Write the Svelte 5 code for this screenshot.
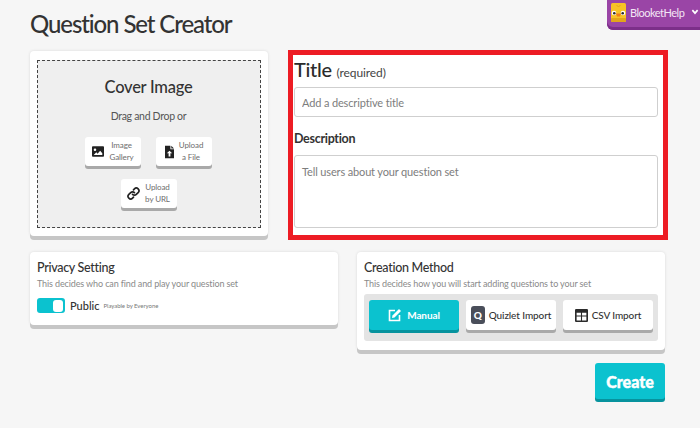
<script>
  let isPublic = $state(true);
  const methods = [
    { id: 'manual', label: 'Manual', active: true },
    { id: 'quizlet', label: 'Quizlet Import', active: false },
    { id: 'csv', label: 'CSV Import', active: false }
  ];
</script>

<main>
  <div class="account">
    <svg class="blook" viewBox="0 0 15 19" width="15" height="19">
      <rect width="15" height="19" rx="1.5" fill="#f7c326" />
      <rect y="15" width="15" height="4" rx="1" fill="#e2a51c" />
      <circle cx="3" cy="10" r="2.300" fill="#fff" />
      <circle cx="12" cy="10" r="2.300" fill="#fff" />
      <circle cx="3.300" cy="10.200" r="1.300" fill="#2a2a2a" />
      <circle cx="11.700" cy="10.200" r="1.300" fill="#2a2a2a" />
      <path d="M5 10.500h5l-1 3H6z" fill="#ef7d1a" />
      <path d="M5.500 2l2 2 2-2" fill="none" stroke="#e2a51c" stroke-width="1" />
    </svg>
    <span class="username">BlooketHelp</span>
    <svg class="chevron" viewBox="0 0 10 8" width="8" height="6">
      <path d="M1.500 1.500L5 5.500L8.500 1.500" fill="none" stroke="#fff" stroke-width="2.200" />
    </svg>
  </div>

  <h1>Question Set Creator</h1>

  <div class="top-row">
    <section class="card cover-card">
      <div class="dropzone">
        <h2>Cover Image</h2>
        <p class="drag">Drag and Drop or</p>
        <div class="upload-buttons">
          <button class="upload">
            <svg viewBox="0 0 14 12" width="12" height="11">
              <path fill-rule="evenodd" d="M1 0h12a1 1 0 0 1 1 1v10a1 1 0 0 1-1 1H1a1 1 0 0 1-1-1V1a1 1 0 0 1 1-1zM2 10h10V8L9.500 5 6.500 8.500 5 7zM3.500 2.500a1.500 1.500 0 1 0 0 3 1.500 1.500 0 0 0 0-3z" fill="#222" />
            </svg>
            <span>Image<br />Gallery</span>
          </button>
          <button class="upload">
            <svg viewBox="0 0 10 14" width="9" height="14">
              <path fill-rule="evenodd" d="M0 0h6v4h4v10H0zM7 0l3 3H7zM5 5.500L2 8.500h2V12h2V8.500h2z" fill="#222" />
            </svg>
            <span>Upload<br />a File</span>
          </button>
          <button class="upload">
            <svg viewBox="0 0 14 14" width="13" height="13">
              <path d="M6 8a2.800 2.800 0 0 0 4 0l2-2a2.800 2.800 0 0 0-4-4L7 3M8 6a2.800 2.800 0 0 0-4 0L2 8a2.800 2.800 0 0 0 4 4l1-1" fill="none" stroke="#222" stroke-width="1.800" stroke-linecap="round" />
            </svg>
            <span>Upload<br />by URL</span>
          </button>
        </div>
      </div>
    </section>

    <section class="details">
      <label class="title-label" for="title">Title <small>(required)</small></label>
      <input id="title" type="text" placeholder="Add a descriptive title" />
      <label class="desc-label" for="description">Description</label>
      <textarea id="description" placeholder="Tell users about your question set"></textarea>
    </section>
  </div>

  <div class="bottom-row">
    <section class="card setting privacy">
      <h3>Privacy Setting</h3>
      <p class="hint">This decides who can find and play your question set</p>
      <div class="privacy-row">
        <button class="toggle" class:on={isPublic} aria-label="Toggle privacy" onclick={() => (isPublic = !isPublic)}>
          <span class="knob"></span>
        </button>
        <span class="public">{isPublic ? 'Public' : 'Private'}</span>
        <span class="playable">Playable by Everyone</span>
      </div>
    </section>

    <div class="right-col">
      <section class="card setting">
        <h3>Creation Method</h3>
        <p class="hint">This decides how you will start adding questions to your set</p>
        <div class="methods">
          {#each methods as m}
            <button class="method" class:active={m.active}>
              {#if m.id === 'manual'}
                <svg viewBox="0 0 14 14" width="14" height="14">
                  <path d="M7 2.500H1.500v10h10V7" fill="none" stroke="#fff" stroke-width="1.600" />
                  <path d="M4.500 7.500L11 1l2 2-6.500 6.500-2.500.5z" fill="#fff" />
                </svg>
              {:else if m.id === 'quizlet'}
                <span class="q-icon">Q</span>
              {:else}
                <svg viewBox="0 0 12 12" width="13" height="13">
                  <path fill-rule="evenodd" d="M1 0h10a1 1 0 0 1 1 1v10a1 1 0 0 1-1 1H1a1 1 0 0 1-1-1V1a1 1 0 0 1 1-1zM1.500 3.500v2.500h4V3.500zM6.500 3.500v2.500h4V3.500zM1.500 7v3.500h4V7zM6.500 7v3.500h4V7z" fill="#2b2b2b" />
                </svg>
              {/if}
              <span>{m.label}</span>
            </button>
          {/each}
        </div>
      </section>
      <button class="create">Create</button>
    </div>
  </div>
</main>

<style>
  :global(body) {
    margin: 0;
    background: #f6f6f6;
  }

  main {
    position: relative;
    width: 700px;
    height: 428px;
    box-sizing: border-box;
    padding: 9px 32px 0 30px;
    overflow: hidden;
    font-family: Lato, "Noto Sans", sans-serif;
    color: #2b2b2b;
  }

  button {
    font-family: inherit;
    border: none;
    padding: 0;
    cursor: pointer;
  }

  h1 {
    margin: 0 0 12px;
    font-size: 24px;
    line-height: 29px;
    font-weight: 500;
    letter-spacing: -1.100px;
    color: #333;
  }

  .account {
    position: absolute;
    top: 0;
    right: 0;
    width: 93px;
    height: 30px;
    box-sizing: border-box;
    padding: 0 0 6px 4px;
    display: flex;
    align-items: center;
    background: #9a45a6;
    border-bottom-left-radius: 6px;
    box-shadow: inset 0 -3px 0 #7c2f89;
  }

  .blook {
    flex: none;
  }

  .username {
    margin-left: 4px;
    font-size: 11px;
    letter-spacing: -0.500px;
    color: #f3e6f5;
  }

  .chevron {
    margin-left: 7px;
  }

  .top-row {
    display: grid;
    grid-template-columns: 238px 380px;
    gap: 20px;
    align-items: start;
  }

  .card {
    background: #fff;
    border-radius: 4px;
    box-shadow: 0 4px 0 #c6c6c6, 0 0 3px rgba(0, 0, 0, 0.12);
  }

  .cover-card {
    height: 185px;
    box-sizing: border-box;
    margin-top: 1px;
    padding: 9px 7px 8px 7px;
  }

  .dropzone {
    height: 100%;
    box-sizing: border-box;
    border: 1px dashed #444;
    padding-right: 1px;
    background: #efefef;
    text-align: center;
  }

  .dropzone h2 {
    margin: 16px 0 0;
    font-size: 16.500px;
    line-height: 21px;
    font-weight: 500;
    letter-spacing: -0.250px;
    color: #333;
  }

  .drag {
    margin: 11px 0 14px;
    font-size: 10.500px;
    line-height: 14px;
    letter-spacing: -0.300px;
    color: #555;
  }

  .upload-buttons {
    display: flex;
    flex-wrap: wrap;
    justify-content: center;
    gap: 13px 15px;
    width: 128px;
    margin: 0 auto;
  }

  .upload {
    width: 56px;
    height: 29px;
    display: flex;
    align-items: center;
    justify-content: center;
    gap: 5px;
    background: #fff;
    border-radius: 3px;
    box-shadow: 0 3px 0 #a9a9a9;
    font-size: 8px;
    line-height: 11.500px;
    letter-spacing: -0.100px;
    color: #6d6d6d;
  }

  .details {
    height: 190px;
    box-sizing: border-box;
    border: 5px solid #ed1c24;
    padding: 2px 5px 0 1px;
    background: #fff;
    display: flex;
    flex-direction: column;
  }

  .title-label {
    height: 24px;
    font-size: 20px;
    line-height: 24px;
    font-weight: 500;
    letter-spacing: -0.300px;
    color: #2b2b2b;
    margin-bottom: 6px;
  }

  .title-label small {
    font-size: 12px;
    font-weight: 400;
    letter-spacing: -0.100px;
    color: #444;
  }

  input,
  textarea {
    display: block;
    flex: none;
    width: 100%;
    box-sizing: border-box;
    border: 1px solid #cfcfcf;
    border-radius: 3px;
    padding: 0 7px;
    font-family: inherit;
    font-size: 11px;
    letter-spacing: -0.140px;
    background: #fff;
    resize: none;
    outline: none;
  }

  input {
    height: 30px;
  }

  textarea {
    height: 73px;
    padding-top: 9px;
  }

  input::placeholder,
  textarea::placeholder {
    color: #7d7d7d;
    opacity: 1;
  }

  .desc-label {
    margin: 14px 0 8px;
    font-size: 12.500px;
    line-height: 16px;
    font-weight: 700;
    letter-spacing: -0.300px;
    color: #333;
  }

  .bottom-row {
    display: grid;
    grid-template-columns: 308px 308px;
    gap: 19px;
    margin-top: 12px;
    align-items: start;
  }

  .setting {
    padding: 8px 7px 0;
    box-sizing: border-box;
  }

  .privacy {
    height: 73px;
  }

  h3 {
    margin: 0;
    font-size: 12.500px;
    line-height: 16px;
    font-weight: 500;
    letter-spacing: -0.300px;
    color: #333;
  }

  .hint {
    margin: 1px 0 0;
    font-size: 9px;
    line-height: 14px;
    letter-spacing: -0.120px;
    color: #8a8a8a;
  }

  .privacy-row {
    display: flex;
    align-items: center;
    margin-top: 7px;
  }

  .toggle {
    width: 28px;
    height: 15px;
    position: relative;
    border-radius: 3px;
    background: #b5b5b5;
  }

  .toggle.on {
    background: #0bc2cf;
  }

  .knob {
    position: absolute;
    top: 1.500px;
    left: 2px;
    width: 10px;
    height: 12px;
    border-radius: 3px;
    background: #fff;
  }

  .toggle.on .knob {
    left: 16px;
  }

  .public {
    margin-left: 5px;
    font-size: 11px;
    font-weight: 500;
    color: #333;
  }

  .playable {
    margin-left: 4px;
    font-size: 6px;
    letter-spacing: -0.050px;
    color: #777;
  }

  .right-col {
    display: flex;
    flex-direction: column;
    align-items: flex-end;
  }

  .right-col .card {
    width: 100%;
    height: 98px;
  }

  .methods {
    display: flex;
    gap: 7px;
    margin-top: 3px;
    padding: 6px 5px 0;
    height: 47px;
    box-sizing: border-box;
    background: #e4e4e4;
    border-radius: 3px;
  }

  .method {
    flex: 1;
    height: 30px;
    display: flex;
    align-items: center;
    justify-content: center;
    gap: 4px;
    background: #fff;
    border-radius: 3px;
    box-shadow: 0 3px 0 #a9a9a9;
    font-size: 10px;
    font-weight: 500;
    letter-spacing: -0.100px;
    color: #333;
  }

  .method.active {
    background: #0bc2cf;
    box-shadow: 0 3px 0 #07939e;
    color: #fff;
    gap: 5px;
    font-weight: 700;
  }

  .q-icon {
    width: 14px;
    height: 18px;
    display: flex;
    align-items: center;
    justify-content: center;
    background: #4a4e5a;
    border-radius: 3px;
    font-size: 10px;
    font-weight: 900;
    color: #fff;
  }

  .create {
    width: 70px;
    height: 36px;
    margin-top: 13px;
    background: #0bc2cf;
    border-radius: 3px;
    box-shadow: 0 3px 0 #07939e;
    font-size: 16px;
    font-weight: 900;
    -webkit-text-stroke: 0.400px #fff;
    color: #fff;
  }
</style>
